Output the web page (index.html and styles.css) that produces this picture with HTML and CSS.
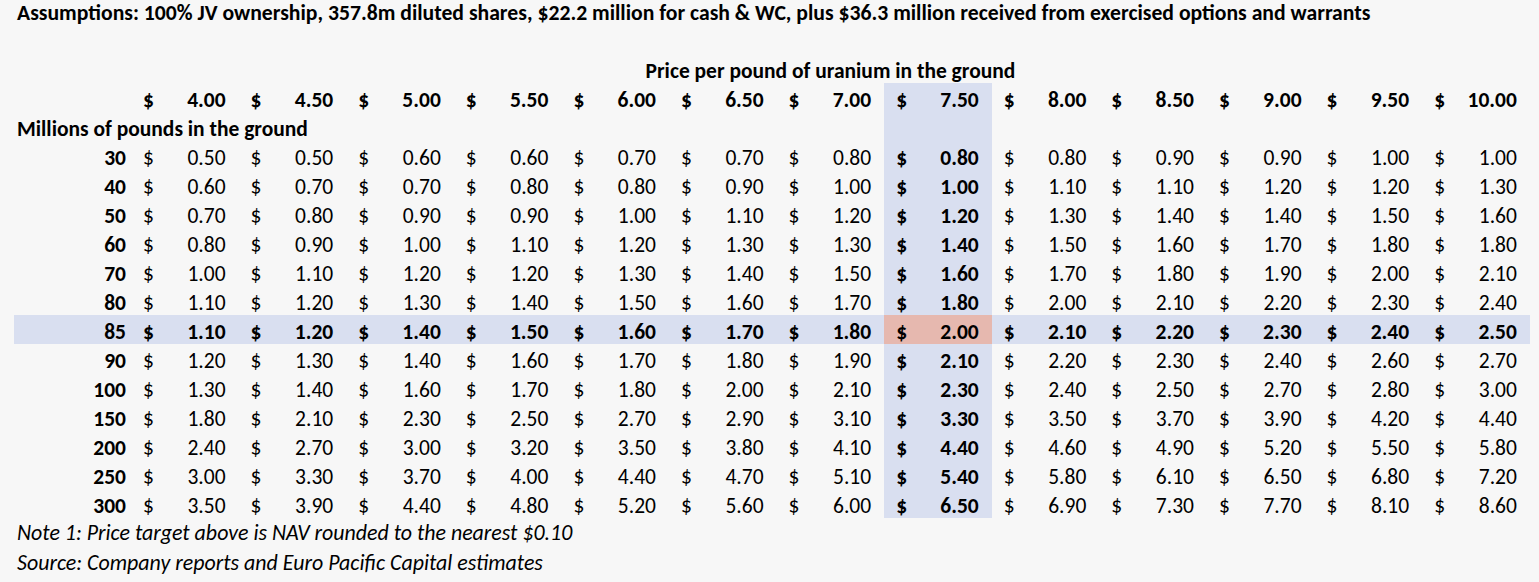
FILE: index.html
```html
<!DOCTYPE html>
<html lang="en">
<head>
<meta charset="utf-8">
<title>NAV sensitivity</title>
<link rel="stylesheet" href="styles.css">
</head>
<body>
<div class="sheet">
  <div class="title">Assumptions: 100% JV ownership, 357.8m diluted shares, $22.2 million for cash &amp; WC, plus $36.3 million received from exercised options and warrants</div>
  <table class="grid">
    <colgroup>
      <col class="c-lbl">
      <col class="c-p"><col class="c-p"><col class="c-p"><col class="c-p"><col class="c-p"><col class="c-p"><col class="c-p">
      <col class="c-p"><col class="c-p"><col class="c-p"><col class="c-p"><col class="c-p"><col class="c-p">
    </colgroup>
    <tr class="cap"><td></td><td colspan="13">Price per pound of uranium in the ground</td></tr>
    <tr class="head">
      <td></td>
      <td><span class="d">$</span>4.00</td><td><span class="d">$</span>4.50</td><td><span class="d">$</span>5.00</td><td><span class="d">$</span>5.50</td><td><span class="d">$</span>6.00</td><td><span class="d">$</span>6.50</td><td><span class="d">$</span>7.00</td>
      <td class="hl"><span class="d">$</span>7.50</td>
      <td><span class="d">$</span>8.00</td><td><span class="d">$</span>8.50</td><td><span class="d">$</span>9.00</td><td><span class="d">$</span>9.50</td><td><span class="d">$</span>10.00</td>
    </tr>
    <tr class="sub"><td colspan="8" class="axis">Millions of pounds in the ground</td><td class="hl"></td><td colspan="5"></td></tr>
    <tr><th>30</th><td><span class="d">$</span>0.50</td><td><span class="d">$</span>0.50</td><td><span class="d">$</span>0.60</td><td><span class="d">$</span>0.60</td><td><span class="d">$</span>0.70</td><td><span class="d">$</span>0.70</td><td><span class="d">$</span>0.80</td><td class="hl"><span class="d">$</span>0.80</td><td><span class="d">$</span>0.80</td><td><span class="d">$</span>0.90</td><td><span class="d">$</span>0.90</td><td><span class="d">$</span>1.00</td><td><span class="d">$</span>1.00</td></tr>
    <tr><th>40</th><td><span class="d">$</span>0.60</td><td><span class="d">$</span>0.70</td><td><span class="d">$</span>0.70</td><td><span class="d">$</span>0.80</td><td><span class="d">$</span>0.80</td><td><span class="d">$</span>0.90</td><td><span class="d">$</span>1.00</td><td class="hl"><span class="d">$</span>1.00</td><td><span class="d">$</span>1.10</td><td><span class="d">$</span>1.10</td><td><span class="d">$</span>1.20</td><td><span class="d">$</span>1.20</td><td><span class="d">$</span>1.30</td></tr>
    <tr><th>50</th><td><span class="d">$</span>0.70</td><td><span class="d">$</span>0.80</td><td><span class="d">$</span>0.90</td><td><span class="d">$</span>0.90</td><td><span class="d">$</span>1.00</td><td><span class="d">$</span>1.10</td><td><span class="d">$</span>1.20</td><td class="hl"><span class="d">$</span>1.20</td><td><span class="d">$</span>1.30</td><td><span class="d">$</span>1.40</td><td><span class="d">$</span>1.40</td><td><span class="d">$</span>1.50</td><td><span class="d">$</span>1.60</td></tr>
    <tr><th>60</th><td><span class="d">$</span>0.80</td><td><span class="d">$</span>0.90</td><td><span class="d">$</span>1.00</td><td><span class="d">$</span>1.10</td><td><span class="d">$</span>1.20</td><td><span class="d">$</span>1.30</td><td><span class="d">$</span>1.30</td><td class="hl"><span class="d">$</span>1.40</td><td><span class="d">$</span>1.50</td><td><span class="d">$</span>1.60</td><td><span class="d">$</span>1.70</td><td><span class="d">$</span>1.80</td><td><span class="d">$</span>1.80</td></tr>
    <tr><th>70</th><td><span class="d">$</span>1.00</td><td><span class="d">$</span>1.10</td><td><span class="d">$</span>1.20</td><td><span class="d">$</span>1.20</td><td><span class="d">$</span>1.30</td><td><span class="d">$</span>1.40</td><td><span class="d">$</span>1.50</td><td class="hl"><span class="d">$</span>1.60</td><td><span class="d">$</span>1.70</td><td><span class="d">$</span>1.80</td><td><span class="d">$</span>1.90</td><td><span class="d">$</span>2.00</td><td><span class="d">$</span>2.10</td></tr>
    <tr><th>80</th><td><span class="d">$</span>1.10</td><td><span class="d">$</span>1.20</td><td><span class="d">$</span>1.30</td><td><span class="d">$</span>1.40</td><td><span class="d">$</span>1.50</td><td><span class="d">$</span>1.60</td><td><span class="d">$</span>1.70</td><td class="hl"><span class="d">$</span>1.80</td><td><span class="d">$</span>2.00</td><td><span class="d">$</span>2.10</td><td><span class="d">$</span>2.20</td><td><span class="d">$</span>2.30</td><td><span class="d">$</span>2.40</td></tr>
    <tr class="base"><th>85</th><td><span class="d">$</span>1.10</td><td><span class="d">$</span>1.20</td><td><span class="d">$</span>1.40</td><td><span class="d">$</span>1.50</td><td><span class="d">$</span>1.60</td><td><span class="d">$</span>1.70</td><td><span class="d">$</span>1.80</td><td class="target"><span class="d">$</span>2.00</td><td><span class="d">$</span>2.10</td><td><span class="d">$</span>2.20</td><td><span class="d">$</span>2.30</td><td><span class="d">$</span>2.40</td><td><span class="d">$</span>2.50</td></tr>
    <tr><th>90</th><td><span class="d">$</span>1.20</td><td><span class="d">$</span>1.30</td><td><span class="d">$</span>1.40</td><td><span class="d">$</span>1.60</td><td><span class="d">$</span>1.70</td><td><span class="d">$</span>1.80</td><td><span class="d">$</span>1.90</td><td class="hl"><span class="d">$</span>2.10</td><td><span class="d">$</span>2.20</td><td><span class="d">$</span>2.30</td><td><span class="d">$</span>2.40</td><td><span class="d">$</span>2.60</td><td><span class="d">$</span>2.70</td></tr>
    <tr><th>100</th><td><span class="d">$</span>1.30</td><td><span class="d">$</span>1.40</td><td><span class="d">$</span>1.60</td><td><span class="d">$</span>1.70</td><td><span class="d">$</span>1.80</td><td><span class="d">$</span>2.00</td><td><span class="d">$</span>2.10</td><td class="hl"><span class="d">$</span>2.30</td><td><span class="d">$</span>2.40</td><td><span class="d">$</span>2.50</td><td><span class="d">$</span>2.70</td><td><span class="d">$</span>2.80</td><td><span class="d">$</span>3.00</td></tr>
    <tr><th>150</th><td><span class="d">$</span>1.80</td><td><span class="d">$</span>2.10</td><td><span class="d">$</span>2.30</td><td><span class="d">$</span>2.50</td><td><span class="d">$</span>2.70</td><td><span class="d">$</span>2.90</td><td><span class="d">$</span>3.10</td><td class="hl"><span class="d">$</span>3.30</td><td><span class="d">$</span>3.50</td><td><span class="d">$</span>3.70</td><td><span class="d">$</span>3.90</td><td><span class="d">$</span>4.20</td><td><span class="d">$</span>4.40</td></tr>
    <tr><th>200</th><td><span class="d">$</span>2.40</td><td><span class="d">$</span>2.70</td><td><span class="d">$</span>3.00</td><td><span class="d">$</span>3.20</td><td><span class="d">$</span>3.50</td><td><span class="d">$</span>3.80</td><td><span class="d">$</span>4.10</td><td class="hl"><span class="d">$</span>4.40</td><td><span class="d">$</span>4.60</td><td><span class="d">$</span>4.90</td><td><span class="d">$</span>5.20</td><td><span class="d">$</span>5.50</td><td><span class="d">$</span>5.80</td></tr>
    <tr><th>250</th><td><span class="d">$</span>3.00</td><td><span class="d">$</span>3.30</td><td><span class="d">$</span>3.70</td><td><span class="d">$</span>4.00</td><td><span class="d">$</span>4.40</td><td><span class="d">$</span>4.70</td><td><span class="d">$</span>5.10</td><td class="hl"><span class="d">$</span>5.40</td><td><span class="d">$</span>5.80</td><td><span class="d">$</span>6.10</td><td><span class="d">$</span>6.50</td><td><span class="d">$</span>6.80</td><td><span class="d">$</span>7.20</td></tr>
    <tr><th>300</th><td><span class="d">$</span>3.50</td><td><span class="d">$</span>3.90</td><td><span class="d">$</span>4.40</td><td><span class="d">$</span>4.80</td><td><span class="d">$</span>5.20</td><td><span class="d">$</span>5.60</td><td><span class="d">$</span>6.00</td><td class="hl"><span class="d">$</span>6.50</td><td><span class="d">$</span>6.90</td><td><span class="d">$</span>7.30</td><td><span class="d">$</span>7.70</td><td><span class="d">$</span>8.10</td><td><span class="d">$</span>8.60</td></tr>
  </table>
  <p class="note">Note 1: Price target above is NAV rounded to the nearest $0.10</p>
  <p class="note">Source: Company reports and Euro Pacific Capital estimates</p>
</div>
</body>
</html>
```
FILE: styles.css
```css
html, body {
  margin: 0;
  padding: 0;
  background: #f7f7f7;
}

body {
  font-family: Carlito, Calibri, Lato, sans-serif;
  font-size: 21.5px;
  color: #000;
}

.sheet {
  padding-left: 14px;
}

.title {
  height: 26px;
  line-height: 26px;
  padding-left: 3px;
  font-size: 21.7px;
  font-weight: bold;
  white-space: nowrap;
}

.grid {
  margin-top: 28px;
  border-collapse: collapse;
  border-spacing: 0;
  table-layout: fixed;
  width: 1515.8px;
}

.c-lbl { width: 117px; }
.c-p { width: 107.6px; }

.grid td,
.grid th {
  height: 29px;
  padding: 0 13px 0 12px;
  line-height: 23px;
  vertical-align: bottom;
  text-align: right;
  white-space: nowrap;
  font-weight: normal;
}

.grid th {
  padding: 0 5px 0 0;
  font-weight: bold;
}

.d {
  float: left;
}

.cap td {
  text-align: center;
  font-weight: bold;
  padding: 0;
}

.head td {
  font-weight: bold;
}

.grid .axis {
  text-align: left;
  padding-left: 3px;
  font-weight: bold;
}

.grid .hl {
  background: #d9dff0;
  font-weight: bold;
}

.base td,
.base th {
  background: #d9dff0;
  font-weight: bold;
}

.grid .base .target {
  background: #e6b8af;
}

.note {
  margin: 0;
  height: 29.5px;
  line-height: 30px;
  padding-left: 3px;
  font-size: 21.9px;
  font-style: italic;
  white-space: nowrap;
}
```
